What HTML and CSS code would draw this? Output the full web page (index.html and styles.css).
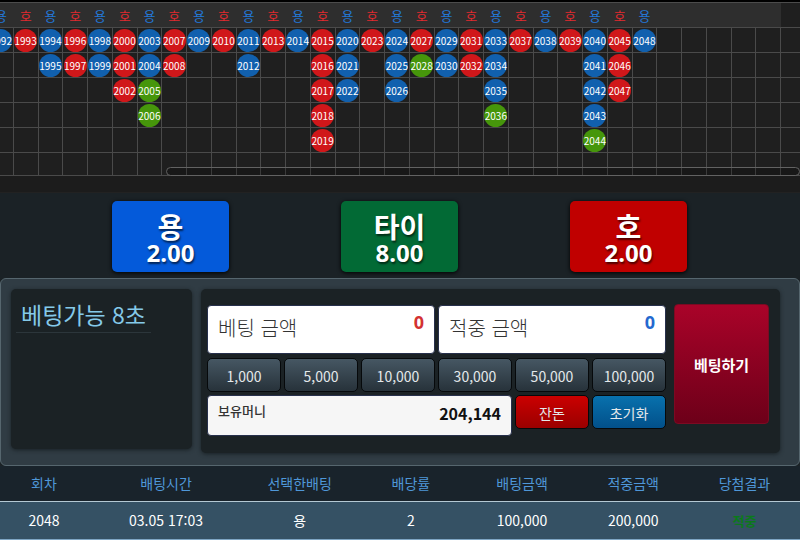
FILE: index.html
```html
<!DOCTYPE html>
<html lang="ko">
<head>
  <meta charset="UTF-8">
  <meta name="viewport" content="width=device-width, initial-scale=1.0">
  <title>용호</title>
  <link rel="stylesheet" href="styles.css">
</head>
<body>
  <section class="board">
    <table class="road">
      <thead><tr id="road-head"></tr></thead>
      <tbody id="road-body"></tbody>
    </table>
    <div class="scroll-thumb"></div>
  </section>

  <section class="odds">
    <button type="button" class="odd dragon"><span class="odd-name">용</span><span class="odd-rate">2.00</span></button>
    <button type="button" class="odd tie"><span class="odd-name">타이</span><span class="odd-rate">8.00</span></button>
    <button type="button" class="odd tiger"><span class="odd-name">호</span><span class="odd-rate">2.00</span></button>
  </section>

  <section class="panel">
    <div class="timer">
      <p class="timer-text">베팅가능 8초</p>
    </div>
    <form class="bet" onsubmit="return false;">
      <div class="bet-fields">
        <div class="field amount">
          <label for="amount">베팅 금액</label>
          <input type="text" id="amount" value="0">
        </div>
        <div class="field win">
          <label for="win">적중 금액</label>
          <input type="text" id="win" value="0" readonly>
        </div>
        <button type="button" class="chip">1,000</button>
        <button type="button" class="chip">5,000</button>
        <button type="button" class="chip">10,000</button>
        <button type="button" class="chip">30,000</button>
        <button type="button" class="chip">50,000</button>
        <button type="button" class="chip">100,000</button>
        <div class="field money">
          <label for="money">보유머니</label>
          <input type="text" id="money" value="204,144" readonly>
        </div>
        <button type="button" class="chip rest">잔돈</button>
        <button type="reset" class="chip reset">초기화</button>
      </div>
      <button type="submit" class="bet-submit">베팅하기</button>
    </form>
  </section>

  <table class="history">
    <colgroup>
      <col class="col-round">
      <col>
      <col class="col-item">
      <col class="col-item">
      <col class="col-item">
      <col class="col-item">
      <col class="col-item">
    </colgroup>
    <thead>
      <tr>
        <th>회차</th>
        <th>배팅시간</th>
        <th>선택한배팅</th>
        <th>배당률</th>
        <th>배팅금액</th>
        <th>적중금액</th>
        <th>당첨결과</th>
      </tr>
    </thead>
    <tbody>
      <tr>
        <td>2048</td>
        <td>03.05 17:03</td>
        <td>용</td>
        <td>2</td>
        <td>100,000</td>
        <td>200,000</td>
        <td class="hit">적중</td>
      </tr>
    </tbody>
  </table>

  <script src="road.js"></script>
</body>
</html>
```

FILE: styles.css
```css
* {
  box-sizing: border-box;
}

body {
  margin: 0;
  background: #1b2226;
  color: #fff;
  font-family: "Noto Sans CJK KR", sans-serif;
  font-size: 14px;
}

button, input {
  font-family: inherit;
}

/* road board */
.board {
  position: relative;
  overflow: hidden;
  padding: 2px 0 16px;
  background: #1c1c1c;
  border-bottom: 1px solid #222;
  box-shadow: inset 0 2px #000;
}

.road {
  width: calc(100% + 18px);
  margin-left: -12px;
  table-layout: fixed;
  border-collapse: collapse;
  background: #1f1f1f;
  border-top: 1px solid #4c4c4c;
}

.road th {
  height: 25px;
  padding: 2px 0 0;
  background: #2e2e2e;
  font-size: 13px;
  line-height: 20px;
  font-weight: normal;
}

.road th.end {
  background: #1f1f1f;
}

.road th.dragon { color: #2377d6; }
.road th.tiger { color: #e12a2f; }

.road td {
  height: 25px;
  padding: 1px 0 0;
  border: 1px solid #4a4a4a;
  vertical-align: top;
}

.road tr:last-child td {
  height: 23px;
}

.ball {
  display: block;
  width: 23px;
  height: 23px;
  margin: 0 auto -4px;
  border-radius: 50%;
  font-size: 10px;
  line-height: 23px;
  text-align: center;
}

.ball.dragon { background: #1160ae; }
.ball.tiger { background: #d0171a; }
.ball.tie { background: #46960b; }

.scroll-thumb {
  position: absolute;
  left: 166px;
  right: 0;
  top: 167px;
  height: 9px;
  border: 1px solid #626262;
  border-radius: 5px;
  background: rgba(0, 0, 0, 0.2);
}

/* odds buttons */
.odds {
  display: grid;
  grid-template-columns: repeat(3, 1fr);
  justify-items: center;
  padding: 8px 57px 6px 56px;
}

.odd {
  display: flex;
  flex-direction: column;
  align-items: center;
  width: 117px;
  height: 71px;
  padding: 9px 0 0;
  border: 0;
  border-radius: 5px;
  color: #fff;
  font-weight: bold;
  text-shadow: 1px 2px 2px rgba(0, 0, 0, 0.6);
  box-shadow: 0 1px 4px #000;
}

.odd.dragon { background: #045ada; }
.odd.tie { background: #026a35; }
.odd.tiger { background: #c00000; }

.odd-name {
  font-size: 28px;
  line-height: 32px;
}

.odd-rate {
  font-family: "Noto Sans", sans-serif;
  font-size: 24px;
  line-height: 21px;
}

/* betting panel */
.panel {
  display: flex;
  align-items: flex-start;
  gap: 9px;
  padding: 10px 19px 12px 10px;
  border: 1px solid #56666e;
  border-radius: 6px;
  background: #303c44;
}

.timer, .bet {
  border-radius: 5px;
  background: #1b2225;
  box-shadow: 0 1px 4px #182024;
}

.timer {
  width: 181px;
  height: 160px;
  padding: 8px 5px;
}

.timer-text {
  display: inline-block;
  margin: 0;
  padding: 0 5px 1px;
  border-bottom: 1px solid #2c363b;
  color: #85c9e9;
  font-size: 23px;
  line-height: 34px;
}

.bet {
  display: flex;
  flex: 1;
  gap: 8px;
  height: 164px;
  padding: 15px 11px 0 6px;
}

.bet-fields {
  display: grid;
  flex: 1;
  grid-template-columns: repeat(6, 1fr);
  grid-template-rows: 50px 34px 41px;
  gap: 3px;
  align-items: start;
  padding-top: 1px;
}

.field {
  display: flex;
  justify-content: space-between;
  align-items: flex-start;
  grid-column: span 3;
  height: 49px;
  padding: 0 10px;
  border: 1px solid #27304c;
  border-radius: 4px;
  background: #fff;
  color: #333;
}

.field label {
  flex: none;
  font-size: 20px;
  line-height: 44px;
  font-weight: 300;
}

.field input {
  width: 100%;
  min-width: 0;
  padding: 0;
  border: 0;
  background: none;
  font-family: "Noto Sans", sans-serif;
  font-size: 18px;
  line-height: 32px;
  font-weight: bold;
  text-align: right;
}

.amount input { color: #d33232; }
.win input { color: #2469cf; }

.field.money {
  grid-column: span 4;
  height: 41px;
  background: #f6f6f6;
}

.money label {
  font-size: 13px;
  line-height: 30px;
  font-weight: 500;
}

.money input {
  font-family: inherit;
  font-size: 16px;
  line-height: 35px;
  color: #111;
}

.chip {
  height: 34px;
  padding: 1px 0 0;
  border: 1px solid #06090b;
  border-radius: 5px;
  background: linear-gradient(#465763, #27323a);
  color: #e4e8ea;
  font-size: 14px;
}

.chip.rest { background: linear-gradient(#cb0000, #9a0000); }
.chip.reset { background: linear-gradient(#0871ad, #02508a); }

.bet-submit {
  width: 95px;
  height: 120px;
  padding: 0;
  border: 1px solid #7c0a22;
  border-radius: 4px;
  background: linear-gradient(#a90329, #6d0019);
  color: #fff;
  font-size: 15px;
  font-weight: bold;
}

/* betting history */
.history {
  width: 100%;
  table-layout: fixed;
  border-collapse: collapse;
  background: #19232b;
  text-align: center;
}

.col-round { width: 11%; }
.col-item { width: 13.9%; }

.history th {
  height: 35px;
  padding: 0;
  border-bottom: 1px solid #b4c8d3;
  color: #4f97d8;
  font-weight: normal;
}

.history td {
  height: 38px;
  padding: 0;
  border-bottom: 1px solid #7fa6c4;
  background: #355164;
}

.history .hit {
  color: #0b7a1a;
  font-size: 13px;
  font-weight: bold;
}
```

FILE: road.js
```js
// first round and number of rounds in each column, dragon and tiger take turns
const firstRound = 1992;
const runs = [1, 1, 2, 2, 2, 3, 4, 2, 1, 1, 2, 1, 1, 5, 3, 1, 3, 2, 2, 2, 4, 1, 1, 1, 5, 3, 1];
const ties = [2005, 2006, 2028, 2036, 2044];
const cols = 33;
const rows = 6;

const head = document.getElementById("road-head");
const body = document.getElementById("road-body");

for (let r = 0; r < rows; r++) {
  body.insertRow();
}

let round = firstRound;
for (let c = 0; c < cols; c++) {
  const side = c % 2 === 0 ? "dragon" : "tiger";
  const count = runs[c] || 0;

  const th = document.createElement("th");
  if (count) {
    th.className = side;
    th.textContent = side === "dragon" ? "용" : "호";
  } else if (c === cols - 1) {
    th.className = "end";
  }
  head.appendChild(th);

  for (let r = 0; r < rows; r++) {
    const cell = body.rows[r].insertCell();
    if (r < count) {
      const ball = document.createElement("span");
      ball.className = "ball " + (ties.includes(round) ? "tie" : side);
      ball.textContent = round;
      cell.appendChild(ball);
      round++;
    }
  }
}
```
